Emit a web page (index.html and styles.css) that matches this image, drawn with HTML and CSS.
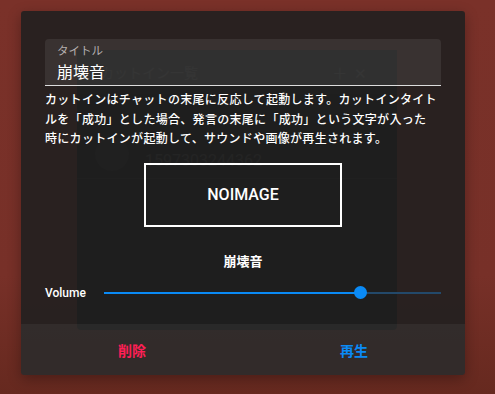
FILE: index.html
```html
<!DOCTYPE html>
<html lang="ja">

<head>
  <meta charset="UTF-8">
  <meta name="viewport" content="width=device-width, initial-scale=1.0">
  <title>カットイン</title>
  <link rel="stylesheet" href="styles.css">
</head>
<body>
  <!-- window behind the dialog -->
  <div class="bg-window">
    <div class="bg-header">
      <span class="bg-title">カットイン一覧</span>
      <span class="bg-icons">＋&nbsp;&nbsp;✕</span>
    </div>
    <div class="bg-row">
      <div class="bg-avatar"></div>
      <span class="bg-id">1597303244362</span>
    </div>
  </div>

  <div class="dialog">
    <div class="dialog-body">
      <div class="field">
        <label class="field-label">タイトル</label>
        <div class="field-value">崩壊音</div>
      </div>

      <p class="desc">カットインはチャットの末尾に反応して起動します。カットインタイトルを「成功」とした場合、発言の末尾に「成功」という文字が入った<br>時にカットインが起動して、サウンドや画像が再生されます。</p>

      <div class="noimage">NOIMAGE</div>

      <div class="sound-name">崩壊音</div>

      <div class="volume">
        <span class="volume-label">Volume</span>
        <div class="slider">
          <div class="slider-fill" style="width: 76%"></div>
          <div class="slider-thumb" style="left: 76%"></div>
        </div>
      </div>
    </div>

    <div class="dialog-footer">
      <button class="btn btn-delete">削除</button>
      <button class="btn btn-play">再生</button>
    </div>
  </div>
</body>
</html>
```

FILE: styles.css
```css
body {
  margin: 0;
  width: 495px;
  height: 394px;
  overflow: hidden;
  position: relative;
  font-family: "Noto Sans CJK JP", "Noto Sans", sans-serif;
  background: linear-gradient(#7a3129, #773028 70%, #66291f);
  color: white;
}

/* faint window seen through the dialog */
.bg-window {
  position: absolute;
  left: 77px;
  top: 50px;
  width: 320px;
  height: 280px;
  background-color: #181818;
  border-radius: 4px;
  color: #4a4a4a;
}

.bg-header {
  display: flex;
  justify-content: space-between;
  align-items: center;
  height: 44px;
  padding: 0 30px 0 23px;
  background-color: #222;
  font-size: 14px;
}

.bg-icons {
  font-size: 15px;
}

.bg-row {
  display: flex;
  align-items: flex-end;
  gap: 16px;
  padding: 0 18px 1px;
  border-bottom: 1px solid #262626;
  height: 83px;
}

.bg-avatar {
  width: 34px;
  height: 34px;
  border-radius: 50%;
  background-color: #262626;
  margin-bottom: 6px;
}

.bg-id {
  font-family: Roboto, sans-serif;
  font-size: 16px;
  line-height: 20px;
  margin-bottom: 6px;
}

.dialog {
  position: absolute;
  left: 21px;
  top: 11px;
  width: 444px;
  height: 364px;
  display: flex;
  flex-direction: column;
  background-color: rgba(32, 32, 32, 0.89);
  border-radius: 3px;
  box-shadow: 0 4px 14px rgba(0, 0, 0, 0.3);
  overflow: hidden;
}

.dialog-body {
  flex: 1;
  padding: 28px 24px 0;
}

.field {
  background-color: rgba(255, 255, 255, 0.08);
  border-radius: 4px 4px 0 0;
  border-bottom: 1px solid #ddd;
  padding: 3px 12px 0;
  height: 43px;
}

.field-label {
  display: block;
  font-size: 11.5px;
  line-height: 17px;
  color: #b5b0b0;
}

.field-value {
  font-size: 16px;
  line-height: 24px;
  color: #fff;
}

.desc {
  margin: 3px 0 0;
  font-size: 12px;
  line-height: 19.5px;
  letter-spacing: 0.3px;
  font-weight: 500;
}

.noimage {
  margin: 15px auto 0;
  width: 194px;
  height: 60px;
  border: 2px solid #fff;
  display: flex;
  align-items: center;
  justify-content: center;
  font-family: Roboto, sans-serif;
  font-size: 16px;
  font-weight: 500;
}

.sound-name {
  margin-top: 24px;
  text-align: center;
  font-size: 13px;
  font-weight: bold;
  line-height: 20px;
}

.volume {
  display: flex;
  align-items: center;
  gap: 18px;
  margin-top: 12px;
  height: 20px;
}

.volume-label {
  font-family: Roboto, sans-serif;
  font-size: 12px;
  font-weight: 500;
}

.slider {
  position: relative;
  flex: 1;
  height: 2px;
  background-color: #23496a;
}

.slider-fill {
  height: 100%;
  background-color: #0a8af5;
}

.slider-thumb {
  position: absolute;
  top: -6px;
  width: 13px;
  height: 13px;
  margin-left: -6px;
  border-radius: 50%;
  background-color: #0a8af5;
}

.dialog-footer {
  display: flex;
  height: 51px;
  background-color: rgba(255, 255, 255, 0.05);
}

.btn {
  flex: 1;
  background: none;
  border: none;
  font-family: "Noto Sans CJK JP", sans-serif;
  font-size: 14px;
  font-weight: bold;
  cursor: pointer;
}

.btn-delete {
  color: #ff1f55;
}

.btn-play {
  color: #0a8af5;
}
```
